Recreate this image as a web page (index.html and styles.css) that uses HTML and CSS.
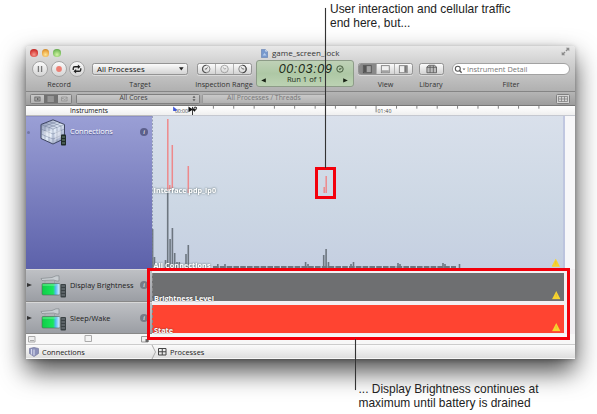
FILE: index.html
```html
<!DOCTYPE html>
<html lang="en">
<head>
<meta charset="utf-8">
<title>Instruments</title>
<link rel="stylesheet" href="styles.css">
</head>
<body>
<svg width="0" height="0" class="defs">
  <defs>
    <linearGradient id="batt" x1="0" x2="1" y1="0" y2="0"><stop offset="0" stop-color="#0fce47"/><stop offset=".62" stop-color="#19e65d"/><stop offset=".76" stop-color="#55b9f5"/><stop offset="1" stop-color="#eaf7ff"/></linearGradient>
    <linearGradient id="cube" x1="0" x2="1" y1="0" y2="1"><stop offset="0" stop-color="#7c86a8"/><stop offset=".5" stop-color="#e3ecf8"/><stop offset="1" stop-color="#8690b4"/></linearGradient>
    <symbol id="power" viewBox="0 0 27 23">
      <path d="M1 3.500 12 2.500l4-1.700h3v5.200H17L13.500 5 2 5.500z" fill="#c9ced2" stroke="#858b8f" stroke-width=".7"/>
      <path d="M5 5.500v2M14.500 6v2" stroke="#9da2a6"/>
      <rect x="2" y="8.500" width="18" height="11.500" rx="1" fill="url(#batt)" stroke="#526459" stroke-width=".6"/>
      <path d="M2.500 10h14" stroke="#8af5ab" stroke-width=".8"/>
      <rect x="20.500" y="9" width="5.500" height="13.500" rx="1" fill="#3b4245"/>
      <path d="M21.500 11h3.500M21.500 14h3.500M21.500 17h3.500M21.500 20h3.500" stroke="#8f989c" stroke-width=".8"/>
    </symbol>
    <symbol id="warn" viewBox="0 0 8 8"><path d="M4 0 8 7.800H0z" fill="#f7d32f"/><path d="M4 2.500v3" stroke="#e6bd2a" stroke-width=".7"/></symbol>
  </defs>
</svg>
<main class="window">
  <header class="toolbar">
    <div class="titlebar">
      <span class="lights"><i class="light close"></i><i class="light min"></i><i class="light max"></i></span>
      <span class="title"><svg width="7" height="9" viewBox="0 0 7 9"><path d="M.4.4h4l2.200 2.200v6H.4z" fill="#7799ce" stroke="#5e7aac" stroke-width=".6"/><path d="M4.400.4v2.200h2.200z" fill="#e5edf8"/><path d="M1.600 6.500 3.500 4l2 2.500z" fill="#b7cdec"/></svg><span class="title-text">game_screen_lock</span></span>
      <svg class="expand" width="9" height="9" viewBox="0 0 9 9"><path d="M4.800.7h3.500v3.500L7 3 5.500 4.500l-1-1L6 2zM4.200 8.300H.7V4.800L2 6l1.500-1.500 1 1L3 7z" fill="#8b8b8b"/></svg>
    </div>
    <div class="controls">
      <section class="tool record">
        <div class="row rounds">
          <svg class="round" viewBox="0 0 16 16"><path d="M6.200 4.500v7M9.800 4.500v7" stroke="#777" stroke-width="1.500"/></svg>
          <svg class="round" viewBox="0 0 16 16"><circle cx="8" cy="8" r="3.300" fill="#ed7f74"/></svg>
          <svg class="round" viewBox="0 0 16 16"><path d="M3.700 9V7.200Q3.700 5.400 5.500 5.400h4M12.300 7v1.800q0 1.800-1.800 1.800H6.500" fill="none" stroke="#222" stroke-width="1.500"/><path d="M9 2.900 12 5.400 9 7.900zM7 8.100 4 10.600 7 13.100z" fill="#222"/></svg>
        </div>
        <span class="label">Record</span>
      </section>
      <section class="tool target">
        <div class="row"><div class="btn popup"><span>All Processes</span><svg width="5" height="4"><path d="M0 .3h4.600L2.300 3.600z" fill="#222"/></svg></div></div>
        <span class="label">Target</span>
      </section>
      <section class="tool range">
        <div class="row"><div class="btn seg">
          <svg viewBox="0 0 18 12"><circle cx="8.700" cy="6" r="4.500" fill="none" stroke="#777" stroke-width="1"/><path d="M8.700 1.500a4.500 4.500 0 0 0 0 9" fill="none" stroke="#555" stroke-width="1.400"/><path d="M8.700 6 10.200 4M7 6h2" stroke="#555"/></svg>
          <svg viewBox="0 0 18 12"><circle cx="9" cy="6" r="4.500" fill="none" stroke="#969696"/><path d="M9 6.200 7.500 4M9 6.200l2-1" stroke="#999"/></svg>
          <svg viewBox="0 0 18 12"><circle cx="9" cy="6" r="4.500" fill="none" stroke="#777"/><path d="M9 1.500a4.500 4.500 0 0 1 0 9" fill="none" stroke="#444" stroke-width="1.400"/><path d="M9 6 7.500 4M9 6h2" stroke="#555"/></svg>
        </div></div>
        <span class="label">Inspection Range</span>
      </section>
      <section class="lcd">
        <div class="lcd-time"><span class="digits">00:03:09</span><svg width="8" height="8" viewBox="0 0 8 8"><circle cx="4" cy="4" r="3.200" fill="none" stroke="#3b5134" stroke-width=".9"/><path d="M4 4.300 5.600 3M4 4.300 3 4" stroke="#26351f" stroke-width=".9"/></svg></div>
        <div class="lcd-run"><svg width="5" height="5"><path d="M4.800.2v4.400L.2 2.400z" fill="#172113"/></svg><span>Run 1 of 1</span><svg width="5" height="5"><path d="M.2.200v4.400l4.600-2.200z" fill="#172113"/></svg></div>
      </section>
      <section class="tool view">
        <div class="row"><div class="btn seg">
          <svg class="on" viewBox="0 0 18 12"><rect x="4" y="2" width="9.500" height="8.500" fill="#a3a3a3" stroke="#4d4d4d"/><path d="M4.500 2.500h3.500V10H4.500z" fill="#555"/></svg>
          <svg viewBox="0 0 18 12"><rect x="4" y="2" width="9.500" height="8.500" fill="#f0f0f0" stroke="#777"/><path d="M4.500 7.500H13V10H4.500z" fill="#a2a2a2"/></svg>
          <svg viewBox="0 0 18 12"><rect x="4" y="2" width="9.500" height="8.500" fill="#eee" stroke="#777"/><path d="M10 2.500h3V10h-3z" fill="#777"/></svg>
        </div></div>
        <span class="label">View</span>
      </section>
      <section class="tool library">
        <div class="row"><div class="btn seg"><svg viewBox="0 0 24 12"><path d="M6.500 3.500 9 1.500h6.500l2.500 2v7H6.500z" fill="#bbb" stroke="#555"/><path d="M6.500 4H18M10.300 2v8.500M14.200 2v8.500" stroke="#555" stroke-width=".9"/></svg></div></div>
        <span class="label">Library</span>
      </section>
      <section class="tool filter">
        <div class="row"><div class="search"><svg width="12" height="9" viewBox="0 0 12 9"><circle cx="3.800" cy="3.700" r="2.500" fill="none" stroke="#555" stroke-width="1.100"/><path d="M5.600 5.500 7.600 7.800" stroke="#555" stroke-width="1.300"/><path d="M8.500 3.500h3L10 5.300z" fill="#666"/></svg><span>Instrument Detail</span></div></div>
        <span class="label">Filter</span>
      </section>
    </div>
  </header>
  <nav class="strategy">
    <div class="mini seg3">
      <svg viewBox="0 0 14 10"><rect x="3.500" y="2.500" width="6.500" height="5" fill="#aaa" stroke="#555" stroke-width=".9"/><path d="M6 4h2v2H6z" fill="#555"/></svg>
      <svg class="on" viewBox="0 0 14 10"><path d="M3 2.500h8M3 5h8M3 7.500h8" stroke="#d8d8d8" stroke-width=".9"/></svg>
      <svg viewBox="0 0 14 10"><path d="M3 2.500h7v5H3zM3 5l2-1 2 2 3-3" fill="none" stroke="#888" stroke-width=".8"/></svg>
    </div>
    <div class="mini cores"><span>All Cores</span><svg width="4" height="7"><path d="M.5 2.800 2 .800 3.500 2.800zM.5 4.200 2 6.200 3.500 4.200z" fill="#555"/></svg></div>
    <div class="mini threads"><span>All Processes / Threads</span></div>
    <div class="mini grid-btn"><svg width="10" height="6" viewBox="0 0 10 6"><path d="M.5.5h9v5h-9zM3.500.5v5M6.500.5v5M.5 3h9" fill="none" stroke="#777" stroke-width=".7"/></svg></div>
  </nav>
  <div class="ruler">
    <div class="ruler-name">Instruments</div>
    <svg class="ticks" width="423" height="10" viewBox="152 106 423 10">
      <path d="M196.700 106v3M219.300 106v3M242 106v3M264.500 106v3M287 106v3M309.800 106v3M332.300 106v3M355 106v3M377.500 106v7M400.200 106v3M422.800 106v3M445.400 106v3M468 106v3M490.700 106v3M513.300 106v3M535.800 106v3M558.400 106v3" stroke="#666" stroke-width=".9"/>
      <text x="154" y="114" class="tick-text" textLength="14.500">00:00</text>
      <text x="379" y="114" class="tick-text" textLength="15.500">01:40</text>
      <path d="M152 106.500 155.800 109.500V111.500H152z" fill="#4057d6"/>
      <path d="M169 106.500 174 110 169 113zM178.500 107 173 110l3 2.500z" fill="#111"/><path d="M173.500 107v9" stroke="#222"/><circle cx="176.500" cy="108.700" r="1.500" fill="#bbb" stroke="#111" stroke-width=".9"/>
    </svg>
  </div>
  <div class="track connections">
    <div class="instrument">
      <i class="dot"></i>
      <svg class="cube" width="27" height="27" viewBox="0 0 27 27"><path d="M1 5.500 13 .8 24.500 5.500v14L13 25 1 19.500z" fill="url(#cube)" stroke="#303853" stroke-width=".9"/><path d="M1 5.500 13 10l11.500-4.500M13 10v15M1 10 13 15l11.500-5M1 15l12 5 11.500-5M5 7v14M9 8.500v14.500M17 8.500v14.500M21 7v14M5 4l12 4.500M9 2.500 21 7M9 8.500 21 4M5 7l12-4.500" fill="none" stroke="#687492" stroke-width=".45"/><path d="M4 12h7v7l-7-3zM15 13l6-2v7l-6 3z" fill="#fff" opacity=".35"/><rect x="21" y="15.500" width="5" height="11" rx=".8" fill="#202b29"/><path d="M22 18h3M22 21h3M22 24h3" stroke="#87a690" stroke-width=".8"/></svg>
      <span class="name">Connections</span>
      <span class="info">i</span>
    </div>
    <svg class="plot" width="423" height="153" viewBox="152 116 423 153">
      <g class="pink"><path d="M167.800 119v72M172.300 145v43M188.300 166v27"/><path d="M169.800 185v6M324.200 187v6M326.200 176v17"/></g>
      <path class="bars" d="M152.600 269v-40M154.500 269v-12M165.500 269v-9M167.700 269v-76M170.100 269v-30M172.400 269v-41M174.700 269v-16M177 269v-7M179.300 269v-7M186 269v-15M188.300 269v-24M305.600 269v-7M323.700 269v-14M326.100 269v-20M328.500 269v-7M353.500 269v-7M398 269v-6M443 269v-6M217.800 269v-5M225 269v-5M308 269v-5M351 269v-5M400 269v-5M445 269v-5"/>
      <path class="hum" d="M213 267.200H456"/><path class="bars" d="M459.500 269v-5"/>
      <use href="#warn" x="551.500" y="258.500" width="8.500" height="8.500"/>
      <path d="M564 116v153" stroke="#b9bfdc" stroke-width="1.500"/><path d="M565 116h10v153h-10z" fill="#f7f7f9"/>
      <path d="M152.300 116v153" stroke="#747b98" stroke-width=".8" stroke-dasharray="2 1.500"/>
      <text x="153.500" y="192.700" class="lane" textLength="62.500">Interface pdp_ip0</text>
      <text x="153.500" y="267.600" class="lane" textLength="57">All Connections</text>
    </svg>
  </div>
  <div class="track power">
    <div class="instrument"><b class="tri"></b><svg class="pic" width="27" height="23"><use href="#power"/></svg><span class="name">Display Brightness</span><span class="info">i</span></div>
    <div class="lane-wrap"><div class="bar gray"><span>Brightness Level</span><svg width="9" height="9"><use href="#warn" width="8.500" height="8.500"/></svg></div></div>
  </div>
  <div class="track power">
    <div class="instrument"><b class="tri"></b><svg class="pic" width="27" height="23"><use href="#power"/></svg><span class="name sleep">Sleep/Wake</span><span class="info">i</span></div>
    <div class="lane-wrap"><div class="bar red"><span>State</span><svg width="9" height="9"><use href="#warn" width="8.500" height="8.500"/></svg></div></div>
  </div>
  <div class="sizer"><svg width="8" height="7"><path d="M.5.500h6.500v5.500H.5z" fill="#eee" stroke="#aaa"/><path d="M2 4.500h4" stroke="#aaa"/></svg><svg width="9" height="8"><path d="M1 .5h6.500v6H1z" fill="#f3f3f3" stroke="#aaa"/></svg><svg width="8" height="7"><path d="M.5.500H7v5.500H.5z" fill="#eee" stroke="#999"/><path d="M4.500 3h3v3h-3z" fill="#666"/></svg></div>
  <footer class="crumbs">
    <div class="crumb first"><svg width="10" height="10" viewBox="0 0 10 10"><path d="M.5 1.500 5 .4l4.500 1.100v5L5 9.600.5 6.500z" fill="#8b90b9" stroke="#6c7196" stroke-width=".6"/><path d="M2.500 2v5.500M5 2.500v6" stroke="#d4d8ec" stroke-width="1.200"/></svg><span class="c1">Connections</span></div>
    <svg class="chev" width="6" height="14"><path d="M1 0 4.500 7 1 14" fill="none" stroke="#aaa"/></svg>
    <div class="crumb"><svg width="9" height="8"><path d="M.5.500H8v6.500H.5zM4.250.5V7M.5 3.750H8" fill="none" stroke="#444"/></svg><span class="c2">Processes</span></div>
  </footer>
</main>
<div class="spot"></div>
<div class="frame"></div>
<i class="leader top"></i>
<i class="leader bottom"></i>
<p class="note note-top"><span>User interaction and cellular traffic</span><br>end here, but...</p>
<p class="note note-bottom"><span>... Display Brightness continues at</span><br>maximum until battery is drained</p>
</body>
</html>
```

FILE: styles.css
```css
* { box-sizing: border-box; }
html, body { margin: 0; width: 597px; height: 414px; overflow: hidden; background: #fff; }
body { position: relative; padding: 46px 0 0 26px; font: 7.400px/10px "Open Sans", "Noto Sans", sans-serif; color: #1c1c1c; }
.defs { position: absolute; }
svg { display: block; flex: none; }
.window { width: 549px; height: 313px; border-radius: 3px 3px 0 0; background: #f7f7f7; box-shadow: 0 12px 26px rgba(0,0,0,.72), 0 1px 5px rgba(0,0,0,.25); }

.toolbar { height: 46px; border-radius: 3px 3px 0 0; background: linear-gradient(#e8e8e8, #d2d2d2 35%, #b0b0b0); border-bottom: 1px solid #858585; }
.titlebar { height: 14px; display: grid; grid-template-columns: 234px 1fr 14px; align-items: center; }
.lights { display: flex; gap: 4px; padding-left: 4px; }
.light { width: 7.5px; height: 7.5px; border-radius: 50%; }
.close { background: radial-gradient(circle at 50% 70%, #f59a8e, #d63c38 60%, #a32220); }
.min { background: radial-gradient(circle at 50% 70%, #ffe594, #e9a33e 60%, #b67624); }
.max { background: radial-gradient(circle at 50% 70%, #d3f5a3, #7ec262 60%, #4f8d3c); }
.title { display: flex; gap: 4px; align-items: center; padding-left: 1px; font-size: 8px; color: #333; }
.title-text { padding-bottom: 1px; }
.expand { align-self: start; margin-top: 1px; }

.controls { display: flex; height: 31px; }
.tool { display: flex; flex-direction: column; align-items: center; flex: none; }
.row { height: 18px; width: 100%; display: flex; align-items: center; }
.label { height: 10px; margin-top: 1px; font-size: 7.200px; color: #333; white-space: nowrap; }
.record { width: 54px; margin-left: 6px; }
.rounds { gap: 2.500px; }
.round { width: 16px; height: 16px; border-radius: 50%; background: linear-gradient(#fafafa, #d4d4d4); border: 1px solid #a5a5a5; }
.btn { height: 12px; width: 100%; border: 1px solid #949494; border-radius: 2.500px; background: linear-gradient(#fbfbfb, #d3d3d3); box-shadow: 0 1px 0 rgba(255,255,255,.4); }
.target { width: 96px; margin-left: 6px; }
.popup { display: flex; align-items: center; justify-content: space-between; padding: 0 3px 0 4px; font-size: 7.900px; color: #111; }
.seg { display: flex; overflow: hidden; }
.seg svg { flex: 1; height: 10px; min-width: 0; }
.seg svg + svg { border-left: 1px solid #b0b0b0; }
.seg .on { background: #898989; }
.range { width: 55px; margin-left: 8.500px; }
.lcd { width: 97.500px; height: 27px; margin: 0 0 0 4.500px; flex: none; border: 1px solid #8d9c88; border-radius: 3px; background: linear-gradient(#bfd1b7, #aec8a5 50%, #bcd2b3); padding: 1px 4px; color: #1b2816; }
.lcd-time { height: 13px; display: flex; align-items: center; justify-content: flex-end; gap: 3px; padding-right: 5px; }
.digits { font: italic 12.500px/13px "Liberation Sans", sans-serif; letter-spacing: .65px; padding-top: 1px; }
.lcd-run { height: 10px; display: flex; align-items: center; justify-content: space-between; font-size: 7.600px; }
.lcd-run span { margin-top: -2px; }
.view { width: 55px; margin-left: 4.500px; }
.library { width: 25px; margin-left: 5.500px; }
.filter { width: 118px; margin-left: 8.500px; }
.search { width: 100%; height: 12px; border-radius: 6px; border: 1px solid #a2a2a2; background: #fff; display: flex; align-items: center; gap: 1px; padding-left: 1px; color: #777; font-size: 7.400px; }

.strategy { height: 14px; display: flex; align-items: center; background: linear-gradient(#b5b5b5, #9d9d9d); border-bottom: 1px solid #777; padding-left: 4px; }
.mini { height: 10px; border: 1px solid #7f7f7f; border-radius: 1.500px; background: linear-gradient(#c9c9c9, #b2b2b2); display: flex; align-items: center; justify-content: center; color: #444; font-size: 6.900px; flex: none; }
.mini span { margin-top: -1px; }
.seg3 { width: 42px; }
.seg3 svg { flex: 1; height: 8px; min-width: 0; }
.seg3 .on { background: #717171; }
.cores { width: 124px; margin-left: 3.500px; padding: 0 3px 0 43px; justify-content: space-between; }
.threads { width: 124px; margin-left: 2.500px; color: #777; border-color: #999; }
.grid-btn { width: 14px; margin-left: auto; margin-right: 5px; background: #d5d5d5; }

.ruler { height: 10px; display: flex; background: linear-gradient(#fff, #eee); }
.ruler-name { width: 126px; text-align: center; font-size: 6.700px; line-height: 9px; color: #111; border-bottom: 1px solid #bbb; }
.ticks { border-bottom: 1px solid #c5c8d0; }
.tick-text { font: 5.800px "Open Sans", sans-serif; fill: #444; }

.track { display: flex; }
.instrument { width: 126px; flex: none; display: flex; align-items: center; padding: 0 4px 0 1px; }
.name { flex: 1; white-space: nowrap; }
.info { width: 8px; height: 8px; border-radius: 50%; background: #777b85; color: #ddd; font: italic bold 6px/8px "Liberation Serif", serif; text-align: center; }
.connections { height: 153px; }
.connections .instrument { background: linear-gradient(#9a9fd5, #5c61aa); align-items: flex-start; padding-top: 2px; border-top: 1px solid #8c90c6; }
.connections .name { color: #fff; padding-top: 7px; margin-left: 3px; font-size: 7.400px; text-shadow: 0 1px 1px #454a80; }
.connections .info { margin-top: 9px; background: #5c5f8c; }
.dot { width: 3px; height: 3px; border-radius: 50%; background: #7478a5; margin: 12px 11px 0 0; }
.cube { margin-left: -1px; }
.plot { background: linear-gradient(#d9e0eb, #ccd7e4 60%, #c5cfe1); }
.pink path { stroke: #ee898b; stroke-width: 1.500; }
.bars { stroke: #6d7680; stroke-width: 1.600; fill: none; }
.hum { stroke: #6d7680; stroke-width: 2.600; stroke-dasharray: 5.600 1.200; }
.lane { font: bold 7.200px "Open Sans", sans-serif; fill: #fff; filter: drop-shadow(0 0 1px #566); }

.power { height: 32.500px; }
.power .instrument { background: linear-gradient(#bec0c4, #9b9ea4); border-top: 1px solid #d8d8d8; border-bottom: 1px solid #888; }
.tri { border-left: 5px solid #333; border-top: 2.500px solid transparent; border-bottom: 2.500px solid transparent; margin-right: 8px; }
.pic { margin-top: 3px; }
.power .name { margin-left: 3px; }
.lane-wrap { flex: 1; padding: 3.500px 11px 1.200px 0; background: #f2eff2; }
.bar { height: 28px; display: flex; align-items: flex-end; justify-content: space-between; padding: 0 3.500px 0 1px; color: #fff; font-weight: bold; font-size: 7.300px; line-height: 8px; text-shadow: 0 0 1.500px #333; border-left: 1px dashed #888; }
.bar span { margin-bottom: -1px; }
.bar svg { margin-bottom: 1px; }
.gray { background: #6e6f71; }
.red { background: #ff4431; }

.sizer { height: 10px; width: 126px; display: flex; justify-content: space-between; align-items: center; padding: 0 3px 0 2px; }
.crumbs { height: 14px; display: flex; align-items: center; border-top: 1px solid #ccc; background: linear-gradient(#fbfbfb, #dedede); }
.crumb { display: flex; align-items: center; gap: 3px; }
.first { width: 125px; padding-left: 3px; }
.chev { margin-right: 1px; }

.spot { position: absolute; left: 315px; top: 167px; width: 21px; height: 32px; border: 3px solid #f3000b; }
.frame { position: absolute; left: 147px; top: 268px; width: 423px; height: 72px; border: 3px solid #f3000b; }
.leader { position: absolute; width: 1px; background: #333; box-shadow: 0 0 1px #777; }
.leader.top { left: 325px; top: 8px; height: 160px; }
.leader.bottom { left: 355px; top: 339px; height: 51px; }
.note { position: absolute; margin: 0; font: 11.960px/13.500px "Liberation Sans", sans-serif; color: #222; white-space: nowrap; }
.note-top { left: 330px; top: 3px; }
.note-bottom { left: 358.500px; top: 383px; }
```
